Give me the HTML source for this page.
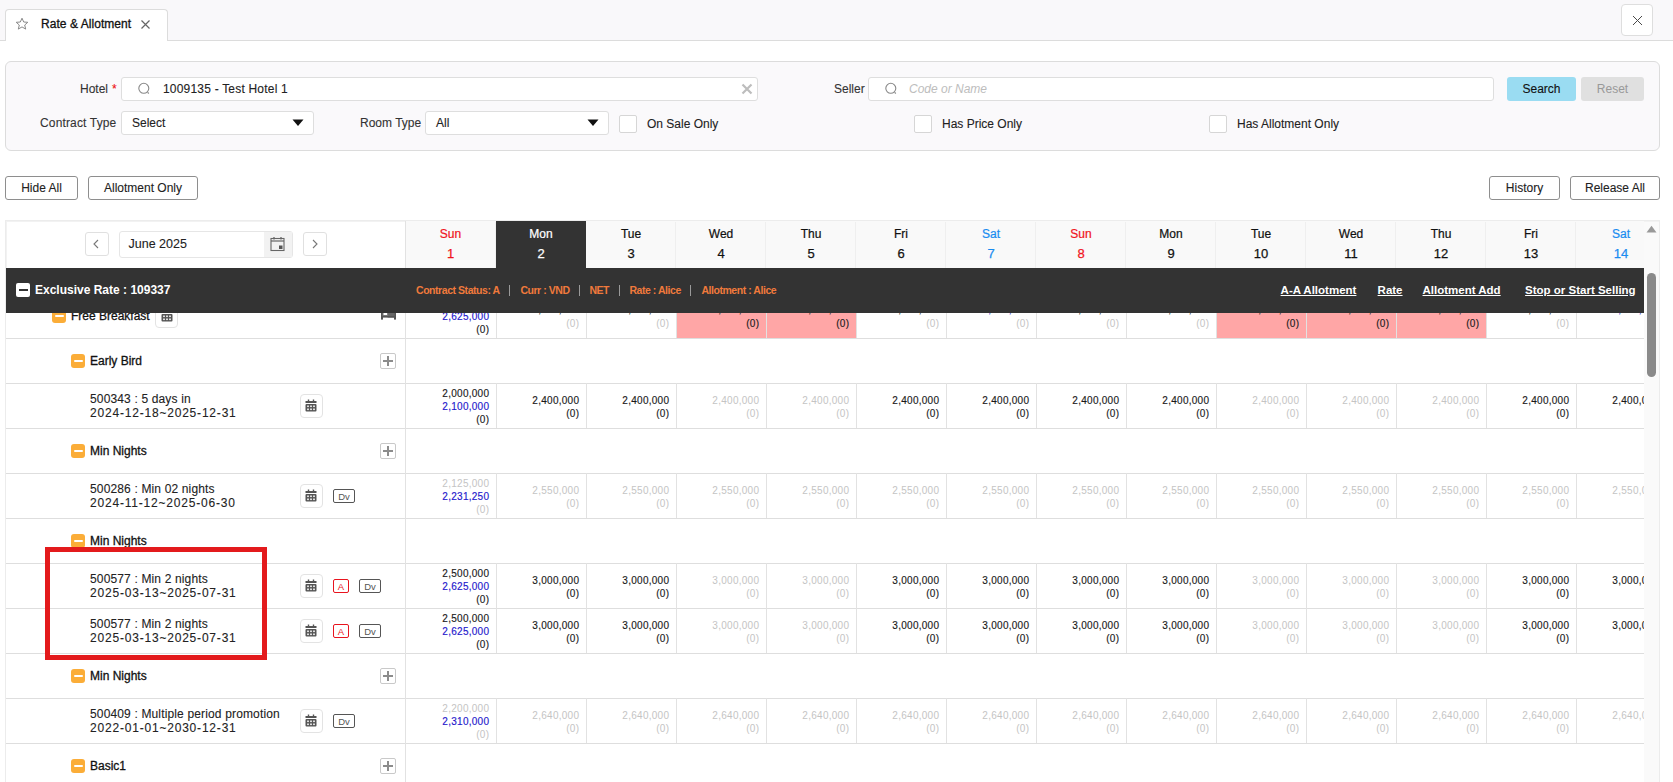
<!DOCTYPE html>
<html><head><meta charset="utf-8"><title>Rate &amp; Allotment</title>
<style>
html,body{margin:0;padding:0;background:#fff;width:1673px;height:782px;overflow:hidden;font-family:"Liberation Sans", sans-serif;}
.t{position:absolute;white-space:nowrap;}

.b{position:absolute;box-sizing:border-box;}
.clip{position:absolute;overflow:hidden;}
</style></head><body>

<div class="b" style="left:0px;top:0px;width:1673px;height:41px;background:#f9f8fa;border-bottom:1px solid #dcdcdc;"></div>
<div class="b" style="left:5px;top:9px;width:163px;height:32px;background:#fff;border:1px solid #dcdcdc;border-bottom:none;border-radius:4px 4px 0 0;"></div>
<svg style="position:absolute;left:15px;top:17px" width="14" height="14" viewBox="0 0 14 14"><path d="M7 1.2 L8.7 5 L12.8 5.3 L9.7 8 L10.7 12.1 L7 9.9 L3.3 12.1 L4.3 8 L1.2 5.3 L5.3 5 Z" fill="none" stroke="#8a8a8a" stroke-width="1" stroke-linejoin="round"/></svg>
<div class="t" style="left:41px;top:16.04px;font-size:12px;line-height:16px;color:#111;font-weight:400;-webkit-text-stroke:0.3px #111;letter-spacing:0.05px;">Rate &amp; Allotment</div>
<svg style="position:absolute;left:140px;top:19px" width="11" height="11" viewBox="0 0 11 11"><path d="M1.5 1.5 L9.5 9.5 M9.5 1.5 L1.5 9.5" stroke="#666" stroke-width="1.2"/></svg>
<div class="b" style="left:1621px;top:4px;width:32px;height:32px;background:#fff;border:1px solid #dedede;border-radius:4px;"></div>
<svg style="position:absolute;left:1632px;top:15px" width="11" height="11" viewBox="0 0 11 11"><path d="M1 1 L10 10 M10 1 L1 10" stroke="#4a4a4a" stroke-width="1"/></svg>
<div class="b" style="left:5px;top:61px;width:1655px;height:90px;background:#faf9fb;border:1px solid #dcdcdc;border-radius:6px;"></div>
<div class="t" style="left:80px;top:81.04px;font-size:12px;line-height:16px;color:#333;font-weight:400;-webkit-text-stroke:0.1px #333;">Hotel</div>
<div class="t" style="left:112px;top:81.04px;font-size:12px;line-height:16px;color:#e11;font-weight:400;-webkit-text-stroke:0.1px #e11;font-size:12px;">*</div>
<div class="b" style="left:121px;top:77px;width:637px;height:24px;background:#fff;border:1px solid #dedede;border-radius:3px;"></div>
<svg style="position:absolute;left:137px;top:82px" width="14" height="14" viewBox="0 0 14 14"><circle cx="6.8" cy="6.3" r="5" fill="none" stroke="#888" stroke-width="1.1"/><path d="M10.6 10.3 L11.8 11.5" stroke="#888" stroke-width="1.2"/></svg>
<div class="t" style="left:163px;top:81.04px;font-size:12px;line-height:16px;color:#222;font-weight:400;-webkit-text-stroke:0.1px #222;letter-spacing:0.2px;">1009135 - Test Hotel 1</div>
<svg style="position:absolute;left:741px;top:83px" width="12" height="12" viewBox="0 0 12 12"><path d="M1.5 1.5 L10.5 10.5 M10.5 1.5 L1.5 10.5" stroke="#bdbdbd" stroke-width="2.2"/></svg>
<div class="t" style="left:834px;top:81.04px;font-size:12px;line-height:16px;color:#333;font-weight:400;-webkit-text-stroke:0.1px #333;">Seller</div>
<div class="b" style="left:868px;top:77px;width:626px;height:24px;background:#fff;border:1px solid #dedede;border-radius:3px;"></div>
<svg style="position:absolute;left:884px;top:82px" width="14" height="14" viewBox="0 0 14 14"><circle cx="6.8" cy="6.3" r="5" fill="none" stroke="#888" stroke-width="1.1"/><path d="M10.6 10.3 L11.8 11.5" stroke="#888" stroke-width="1.2"/></svg>
<div class="t" style="left:909px;top:81.04px;font-size:12px;line-height:16px;color:#bdbdbd;font-weight:400;font-style:italic;">Code or Name</div>
<div class="b" style="left:1507px;top:77px;width:69px;height:24px;background:#9adcf2;border-radius:3px;"></div>
<div class="t" style="left:1507.0px;width:69px;top:80.84px;font-size:12px;line-height:16px;color:#111;font-weight:400;text-align:center;-webkit-text-stroke:0.1px #111;">Search</div>
<div class="b" style="left:1581px;top:77px;width:63px;height:24px;background:#e0e0e0;border-radius:3px;"></div>
<div class="t" style="left:1581.0px;width:63px;top:80.84px;font-size:12px;line-height:16px;color:#999;font-weight:400;text-align:center;">Reset</div>
<div class="t" style="left:40px;top:114.54px;font-size:12px;line-height:16px;color:#333;font-weight:400;-webkit-text-stroke:0.1px #333;letter-spacing:0.15px;">Contract Type</div>
<div class="b" style="left:121px;top:111px;width:193px;height:24px;background:#fff;border:1px solid #dedede;border-radius:3px;"></div>
<div class="t" style="left:132px;top:114.54px;font-size:12px;line-height:16px;color:#222;font-weight:400;-webkit-text-stroke:0.1px #222;">Select</div>
<svg style="position:absolute;left:292px;top:119px" width="12" height="8" viewBox="0 0 12 8"><path d="M0.5 0.5 L11.5 0.5 L6 7 Z" fill="#111"/></svg>
<div class="t" style="left:360px;top:114.54px;font-size:12px;line-height:16px;color:#333;font-weight:400;-webkit-text-stroke:0.1px #333;">Room Type</div>
<div class="b" style="left:425px;top:111px;width:184px;height:24px;background:#fff;border:1px solid #dedede;border-radius:3px;"></div>
<div class="t" style="left:436px;top:114.54px;font-size:12px;line-height:16px;color:#222;font-weight:400;-webkit-text-stroke:0.1px #222;">All</div>
<svg style="position:absolute;left:587px;top:119px" width="12" height="8" viewBox="0 0 12 8"><path d="M0.5 0.5 L11.5 0.5 L6 7 Z" fill="#111"/></svg>
<div class="b" style="left:619px;top:115px;width:18px;height:18px;background:#fff;border:1px solid #d6d6d6;border-radius:2px;"></div>
<div class="t" style="left:647px;top:116.34px;font-size:12px;line-height:16px;color:#222;font-weight:400;-webkit-text-stroke:0.1px #222;">On Sale Only</div>
<div class="b" style="left:914px;top:115px;width:18px;height:18px;background:#fff;border:1px solid #d6d6d6;border-radius:2px;"></div>
<div class="t" style="left:942px;top:116.34px;font-size:12px;line-height:16px;color:#222;font-weight:400;-webkit-text-stroke:0.1px #222;">Has Price Only</div>
<div class="b" style="left:1209px;top:115px;width:18px;height:18px;background:#fff;border:1px solid #d6d6d6;border-radius:2px;"></div>
<div class="t" style="left:1237px;top:116.34px;font-size:12px;line-height:16px;color:#222;font-weight:400;-webkit-text-stroke:0.1px #222;">Has Allotment Only</div>
<div class="b" style="left:5px;top:176px;width:73px;height:24px;background:#fff;border:1px solid #8e8e8e;border-radius:3px;"></div>
<div class="t" style="left:5.0px;width:73px;top:180.24px;font-size:12px;line-height:16px;color:#222;font-weight:400;text-align:center;-webkit-text-stroke:0.1px #222;">Hide All</div>
<div class="b" style="left:88px;top:176px;width:110px;height:24px;background:#fff;border:1px solid #8e8e8e;border-radius:3px;"></div>
<div class="t" style="left:88.0px;width:110px;top:180.24px;font-size:12px;line-height:16px;color:#222;font-weight:400;text-align:center;-webkit-text-stroke:0.1px #222;">Allotment Only</div>
<div class="b" style="left:1489px;top:176px;width:71px;height:24px;background:#fff;border:1px solid #8e8e8e;border-radius:3px;"></div>
<div class="t" style="left:1489.0px;width:71px;top:180.24px;font-size:12px;line-height:16px;color:#222;font-weight:400;text-align:center;-webkit-text-stroke:0.1px #222;">History</div>
<div class="b" style="left:1570px;top:176px;width:90px;height:24px;background:#fff;border:1px solid #8e8e8e;border-radius:3px;"></div>
<div class="t" style="left:1570.0px;width:90px;top:180.24px;font-size:12px;line-height:16px;color:#222;font-weight:400;text-align:center;-webkit-text-stroke:0.1px #222;">Release All</div>
<!--TABLE-->
<div class="b" style="left:5px;top:220px;width:1655px;height:600px;border:1px solid #ececec;"></div>
<div class="b" style="left:6px;top:221px;width:1653px;height:1px;background:#f2f2f2;"></div>
<div class="b" style="left:6px;top:221px;width:1px;height:47px;background:#f2f2f2;"></div>
<div class="b" style="left:1644px;top:222px;width:15px;height:600px;background:#fafafa;"></div>
<svg style="position:absolute;left:1646px;top:225px" width="11" height="8" viewBox="0 0 11 8"><path d="M0.5 7.5 L10.5 7.5 L5.5 0.8 Z" fill="#999"/></svg>
<div class="b" style="left:1647px;top:273px;width:9px;height:104px;background:#8a8a8a;border-radius:5px;"></div>
<div class="clip" style="left:6px;top:221px;width:1638px;height:561px;">
<div style="position:absolute;left:-6px;top:-221px;width:1673px;height:782px;">
<div class="b" style="left:6px;top:338px;width:1660px;height:1px;background:#dedede;"></div>
<div class="b" style="left:6px;top:383px;width:1660px;height:1px;background:#dedede;"></div>
<div class="b" style="left:6px;top:428px;width:1660px;height:1px;background:#dedede;"></div>
<div class="b" style="left:6px;top:473px;width:1660px;height:1px;background:#dedede;"></div>
<div class="b" style="left:6px;top:518px;width:1660px;height:1px;background:#dedede;"></div>
<div class="b" style="left:6px;top:563px;width:1660px;height:1px;background:#dedede;"></div>
<div class="b" style="left:6px;top:608px;width:1660px;height:1px;background:#dedede;"></div>
<div class="b" style="left:6px;top:653px;width:1660px;height:1px;background:#dedede;"></div>
<div class="b" style="left:6px;top:698px;width:1660px;height:1px;background:#dedede;"></div>
<div class="b" style="left:6px;top:743px;width:1660px;height:1px;background:#dedede;"></div>
<div class="b" style="left:6px;top:788px;width:1660px;height:1px;background:#dedede;"></div>
<div class="b" style="left:405px;top:221px;width:1px;height:600px;background:#e2e2e2;"></div>
<div class="b" style="left:406px;top:221px;width:1260px;height:47px;background:#f9f9f9;"></div>
<div class="t" style="left:410.5px;width:80px;top:225.84px;font-size:12px;line-height:16px;color:#f0141e;font-weight:400;text-align:center;-webkit-text-stroke:0.22px #f0141e;">Sun</div>
<div class="t" style="left:410.5px;width:80px;top:245.00px;font-size:13px;line-height:17px;color:#f0141e;font-weight:400;text-align:center;-webkit-text-stroke:0.25px #f0141e;">1</div>
<div class="b" style="left:495px;top:222px;width:1px;height:46px;background:#efefef;"></div>
<div class="b" style="left:496px;top:221px;width:90px;height:47px;background:#333;"></div>
<div class="t" style="left:501.0px;width:80px;top:225.84px;font-size:12px;line-height:16px;color:#fff;font-weight:400;text-align:center;-webkit-text-stroke:0.22px #fff;">Mon</div>
<div class="t" style="left:501.0px;width:80px;top:245.00px;font-size:13px;line-height:17px;color:#fff;font-weight:400;text-align:center;-webkit-text-stroke:0.25px #fff;">2</div>
<div class="t" style="left:591.0px;width:80px;top:225.84px;font-size:12px;line-height:16px;color:#111;font-weight:400;text-align:center;-webkit-text-stroke:0.22px #111;">Tue</div>
<div class="t" style="left:591.0px;width:80px;top:245.00px;font-size:13px;line-height:17px;color:#111;font-weight:400;text-align:center;-webkit-text-stroke:0.25px #111;">3</div>
<div class="b" style="left:675px;top:222px;width:1px;height:46px;background:#efefef;"></div>
<div class="t" style="left:681.0px;width:80px;top:225.84px;font-size:12px;line-height:16px;color:#111;font-weight:400;text-align:center;-webkit-text-stroke:0.22px #111;">Wed</div>
<div class="t" style="left:681.0px;width:80px;top:245.00px;font-size:13px;line-height:17px;color:#111;font-weight:400;text-align:center;-webkit-text-stroke:0.25px #111;">4</div>
<div class="b" style="left:765px;top:222px;width:1px;height:46px;background:#efefef;"></div>
<div class="t" style="left:771.0px;width:80px;top:225.84px;font-size:12px;line-height:16px;color:#111;font-weight:400;text-align:center;-webkit-text-stroke:0.22px #111;">Thu</div>
<div class="t" style="left:771.0px;width:80px;top:245.00px;font-size:13px;line-height:17px;color:#111;font-weight:400;text-align:center;-webkit-text-stroke:0.25px #111;">5</div>
<div class="b" style="left:855px;top:222px;width:1px;height:46px;background:#efefef;"></div>
<div class="t" style="left:861.0px;width:80px;top:225.84px;font-size:12px;line-height:16px;color:#111;font-weight:400;text-align:center;-webkit-text-stroke:0.22px #111;">Fri</div>
<div class="t" style="left:861.0px;width:80px;top:245.00px;font-size:13px;line-height:17px;color:#111;font-weight:400;text-align:center;-webkit-text-stroke:0.25px #111;">6</div>
<div class="b" style="left:945px;top:222px;width:1px;height:46px;background:#efefef;"></div>
<div class="t" style="left:951.0px;width:80px;top:225.84px;font-size:12px;line-height:16px;color:#1a8cf0;font-weight:400;text-align:center;-webkit-text-stroke:0.22px #1a8cf0;">Sat</div>
<div class="t" style="left:951.0px;width:80px;top:245.00px;font-size:13px;line-height:17px;color:#1a8cf0;font-weight:400;text-align:center;-webkit-text-stroke:0.25px #1a8cf0;">7</div>
<div class="b" style="left:1035px;top:222px;width:1px;height:46px;background:#efefef;"></div>
<div class="t" style="left:1041.0px;width:80px;top:225.84px;font-size:12px;line-height:16px;color:#f0141e;font-weight:400;text-align:center;-webkit-text-stroke:0.22px #f0141e;">Sun</div>
<div class="t" style="left:1041.0px;width:80px;top:245.00px;font-size:13px;line-height:17px;color:#f0141e;font-weight:400;text-align:center;-webkit-text-stroke:0.25px #f0141e;">8</div>
<div class="b" style="left:1125px;top:222px;width:1px;height:46px;background:#efefef;"></div>
<div class="t" style="left:1131.0px;width:80px;top:225.84px;font-size:12px;line-height:16px;color:#111;font-weight:400;text-align:center;-webkit-text-stroke:0.22px #111;">Mon</div>
<div class="t" style="left:1131.0px;width:80px;top:245.00px;font-size:13px;line-height:17px;color:#111;font-weight:400;text-align:center;-webkit-text-stroke:0.25px #111;">9</div>
<div class="b" style="left:1215px;top:222px;width:1px;height:46px;background:#efefef;"></div>
<div class="t" style="left:1221.0px;width:80px;top:225.84px;font-size:12px;line-height:16px;color:#111;font-weight:400;text-align:center;-webkit-text-stroke:0.22px #111;">Tue</div>
<div class="t" style="left:1221.0px;width:80px;top:245.00px;font-size:13px;line-height:17px;color:#111;font-weight:400;text-align:center;-webkit-text-stroke:0.25px #111;">10</div>
<div class="b" style="left:1305px;top:222px;width:1px;height:46px;background:#efefef;"></div>
<div class="t" style="left:1311.0px;width:80px;top:225.84px;font-size:12px;line-height:16px;color:#111;font-weight:400;text-align:center;-webkit-text-stroke:0.22px #111;">Wed</div>
<div class="t" style="left:1311.0px;width:80px;top:245.00px;font-size:13px;line-height:17px;color:#111;font-weight:400;text-align:center;-webkit-text-stroke:0.25px #111;">11</div>
<div class="b" style="left:1395px;top:222px;width:1px;height:46px;background:#efefef;"></div>
<div class="t" style="left:1401.0px;width:80px;top:225.84px;font-size:12px;line-height:16px;color:#111;font-weight:400;text-align:center;-webkit-text-stroke:0.22px #111;">Thu</div>
<div class="t" style="left:1401.0px;width:80px;top:245.00px;font-size:13px;line-height:17px;color:#111;font-weight:400;text-align:center;-webkit-text-stroke:0.25px #111;">12</div>
<div class="b" style="left:1485px;top:222px;width:1px;height:46px;background:#efefef;"></div>
<div class="t" style="left:1491.0px;width:80px;top:225.84px;font-size:12px;line-height:16px;color:#111;font-weight:400;text-align:center;-webkit-text-stroke:0.22px #111;">Fri</div>
<div class="t" style="left:1491.0px;width:80px;top:245.00px;font-size:13px;line-height:17px;color:#111;font-weight:400;text-align:center;-webkit-text-stroke:0.25px #111;">13</div>
<div class="b" style="left:1575px;top:222px;width:1px;height:46px;background:#efefef;"></div>
<div class="t" style="left:1581.0px;width:80px;top:225.84px;font-size:12px;line-height:16px;color:#1a8cf0;font-weight:400;text-align:center;-webkit-text-stroke:0.22px #1a8cf0;">Sat</div>
<div class="t" style="left:1581.0px;width:80px;top:245.00px;font-size:13px;line-height:17px;color:#1a8cf0;font-weight:400;text-align:center;-webkit-text-stroke:0.25px #1a8cf0;">14</div>
<div class="b" style="left:85px;top:232px;width:24px;height:24px;background:#fff;border:1px solid #e0e0e0;border-radius:3px;"></div>
<svg style="position:absolute;left:92px;top:239px" width="9" height="10" viewBox="0 0 9 10"><path d="M6 1 L2 5 L6 9" fill="none" stroke="#777" stroke-width="1.1"/></svg>
<div class="b" style="left:119px;top:231px;width:174px;height:27px;background:#fff;border:1px solid #e6e6e6;border-radius:3px;"></div>
<div class="b" style="left:264px;top:232px;width:28px;height:25px;background:#f2f2f2;"></div>
<svg style="position:absolute;left:270px;top:236px" width="16" height="16" viewBox="0 0 16 16"><rect x="1" y="2.5" width="13" height="12" fill="none" stroke="#666" stroke-width="1.1"/><path d="M1 5 L14 5" stroke="#666" stroke-width="1.2"/><path d="M4 1 L4 3.5 M11 1 L11 3.5" stroke="#666" stroke-width="1.3"/><rect x="9" y="9.5" width="3.5" height="3.5" fill="#555"/></svg>
<div class="t" style="left:128.5px;top:236.42px;font-size:12.5px;line-height:16.5px;color:#222;font-weight:400;-webkit-text-stroke:0.1px #222;">June 2025</div>
<div class="b" style="left:303px;top:232px;width:24px;height:24px;background:#fff;border:1px solid #e0e0e0;border-radius:3px;"></div>
<svg style="position:absolute;left:310px;top:239px" width="9" height="10" viewBox="0 0 9 10"><path d="M3 1 L7 5 L3 9" fill="none" stroke="#777" stroke-width="1.1"/></svg>
<div class="b" style="left:52px;top:309px;width:14px;height:14px;background:#fbad38;border-radius:3px;"></div>
<div class="b" style="left:55px;top:315px;width:8.5px;height:2px;background:#fff;border-radius:1px;"></div>
<div class="t" style="left:71px;top:307.84px;font-size:12px;line-height:16px;color:#111;font-weight:400;-webkit-text-stroke:0.3px #111;">Free Breakfast</div>
<div class="b" style="left:155px;top:304px;width:23px;height:24px;background:#fff;border:1px solid #e3e3e3;border-radius:4px;"></div>
<svg style="position:absolute;left:161px;top:309px" width="12" height="13" viewBox="0 0 12 13"><rect x="0.5" y="2" width="11" height="2" fill="#555"/><rect x="0.5" y="5" width="11" height="7.5" rx="1" fill="#555"/><g fill="#fff"><rect x="2.2" y="6.5" width="1.6" height="1.6"/><rect x="5.2" y="6.5" width="1.6" height="1.6"/><rect x="8.2" y="6.5" width="1.6" height="1.6"/><rect x="2.2" y="9.5" width="1.6" height="1.6"/><rect x="5.2" y="9.5" width="1.6" height="1.6"/><rect x="8.2" y="9.5" width="1.6" height="1.6"/></g></svg>
<svg style="position:absolute;left:380px;top:305px" width="17" height="16" viewBox="0 0 17 16"><rect x="1" y="0" width="2" height="14.6" fill="#555"/><rect x="14" y="0" width="2" height="14.6" fill="#555"/><rect x="7.6" y="0" width="7" height="12.5" fill="#666"/><rect x="1" y="11" width="15" height="1.6" fill="#555"/><rect x="3" y="-2" width="4.6" height="12.5" fill="#fff" stroke="#777" stroke-width="1"/></svg>
<div class="t" style="right:1183.7px;top:297.04px;font-size:10px;line-height:13px;color:#1a1a1a;font-weight:400;text-align:right;-webkit-text-stroke:0.15px #1a1a1a;letter-spacing:0.28px;">2,500,000</div>
<div class="t" style="right:1183.7px;top:310.04px;font-size:10px;line-height:13px;color:#2418cc;font-weight:400;text-align:right;-webkit-text-stroke:0.15px #2418cc;letter-spacing:0.28px;">2,625,000</div>
<div class="t" style="right:1183.7px;top:323.04px;font-size:10px;line-height:13px;color:#1a1a1a;font-weight:400;text-align:right;-webkit-text-stroke:0.15px #1a1a1a;letter-spacing:0.28px;">(0)</div>
<div class="b" style="left:496px;top:293px;width:1px;height:45px;background:#e2e2e2;"></div>
<div class="t" style="right:1093.7px;top:302.54px;font-size:10px;line-height:13px;color:#1a1a1a;font-weight:400;text-align:right;-webkit-text-stroke:0.15px #1a1a1a;letter-spacing:0.28px;">3,000,000</div>
<div class="t" style="right:1093.7px;top:316.54px;font-size:10px;line-height:13px;color:#c4c4c4;font-weight:400;text-align:right;letter-spacing:0.28px;">(0)</div>
<div class="b" style="left:586px;top:293px;width:1px;height:45px;background:#e2e2e2;"></div>
<div class="t" style="right:1003.7px;top:302.54px;font-size:10px;line-height:13px;color:#1a1a1a;font-weight:400;text-align:right;-webkit-text-stroke:0.15px #1a1a1a;letter-spacing:0.28px;">3,000,000</div>
<div class="t" style="right:1003.7px;top:316.54px;font-size:10px;line-height:13px;color:#c4c4c4;font-weight:400;text-align:right;letter-spacing:0.28px;">(0)</div>
<div class="b" style="left:677px;top:293px;width:89px;height:45px;background:#ffa6a6;"></div>
<div class="b" style="left:676px;top:293px;width:1px;height:45px;background:#e2e2e2;"></div>
<div class="t" style="right:913.7px;top:302.54px;font-size:10px;line-height:13px;color:#1a1a1a;font-weight:400;text-align:right;-webkit-text-stroke:0.15px #1a1a1a;letter-spacing:0.28px;">3,000,000</div>
<div class="t" style="right:913.7px;top:316.54px;font-size:10px;line-height:13px;color:#1a1a1a;font-weight:400;text-align:right;-webkit-text-stroke:0.15px #1a1a1a;letter-spacing:0.28px;">(0)</div>
<div class="b" style="left:767px;top:293px;width:89px;height:45px;background:#ffa6a6;"></div>
<div class="b" style="left:766px;top:293px;width:1px;height:45px;background:#e2e2e2;"></div>
<div class="t" style="right:823.7px;top:302.54px;font-size:10px;line-height:13px;color:#1a1a1a;font-weight:400;text-align:right;-webkit-text-stroke:0.15px #1a1a1a;letter-spacing:0.28px;">3,000,000</div>
<div class="t" style="right:823.7px;top:316.54px;font-size:10px;line-height:13px;color:#1a1a1a;font-weight:400;text-align:right;-webkit-text-stroke:0.15px #1a1a1a;letter-spacing:0.28px;">(0)</div>
<div class="b" style="left:856px;top:293px;width:1px;height:45px;background:#e2e2e2;"></div>
<div class="t" style="right:733.7px;top:302.54px;font-size:10px;line-height:13px;color:#1a1a1a;font-weight:400;text-align:right;-webkit-text-stroke:0.15px #1a1a1a;letter-spacing:0.28px;">3,000,000</div>
<div class="t" style="right:733.7px;top:316.54px;font-size:10px;line-height:13px;color:#c4c4c4;font-weight:400;text-align:right;letter-spacing:0.28px;">(0)</div>
<div class="b" style="left:946px;top:293px;width:1px;height:45px;background:#e2e2e2;"></div>
<div class="t" style="right:643.7px;top:302.54px;font-size:10px;line-height:13px;color:#2418cc;font-weight:400;text-align:right;-webkit-text-stroke:0.15px #2418cc;letter-spacing:0.28px;">3,000,000</div>
<div class="t" style="right:643.7px;top:316.54px;font-size:10px;line-height:13px;color:#c4c4c4;font-weight:400;text-align:right;letter-spacing:0.28px;">(0)</div>
<div class="b" style="left:1036px;top:293px;width:1px;height:45px;background:#e2e2e2;"></div>
<div class="t" style="right:553.7px;top:302.54px;font-size:10px;line-height:13px;color:#1a1a1a;font-weight:400;text-align:right;-webkit-text-stroke:0.15px #1a1a1a;letter-spacing:0.28px;">3,000,000</div>
<div class="t" style="right:553.7px;top:316.54px;font-size:10px;line-height:13px;color:#c4c4c4;font-weight:400;text-align:right;letter-spacing:0.28px;">(0)</div>
<div class="b" style="left:1126px;top:293px;width:1px;height:45px;background:#e2e2e2;"></div>
<div class="t" style="right:463.70000000000005px;top:302.54px;font-size:10px;line-height:13px;color:#1a1a1a;font-weight:400;text-align:right;-webkit-text-stroke:0.15px #1a1a1a;letter-spacing:0.28px;">3,000,000</div>
<div class="t" style="right:463.70000000000005px;top:316.54px;font-size:10px;line-height:13px;color:#c4c4c4;font-weight:400;text-align:right;letter-spacing:0.28px;">(0)</div>
<div class="b" style="left:1217px;top:293px;width:89px;height:45px;background:#ffa6a6;"></div>
<div class="b" style="left:1216px;top:293px;width:1px;height:45px;background:#e2e2e2;"></div>
<div class="t" style="right:373.70000000000005px;top:302.54px;font-size:10px;line-height:13px;color:#1a1a1a;font-weight:400;text-align:right;-webkit-text-stroke:0.15px #1a1a1a;letter-spacing:0.28px;">3,000,000</div>
<div class="t" style="right:373.70000000000005px;top:316.54px;font-size:10px;line-height:13px;color:#1a1a1a;font-weight:400;text-align:right;-webkit-text-stroke:0.15px #1a1a1a;letter-spacing:0.28px;">(0)</div>
<div class="b" style="left:1307px;top:293px;width:89px;height:45px;background:#ffa6a6;"></div>
<div class="b" style="left:1306px;top:293px;width:1px;height:45px;background:#e2e2e2;"></div>
<div class="t" style="right:283.70000000000005px;top:302.54px;font-size:10px;line-height:13px;color:#1a1a1a;font-weight:400;text-align:right;-webkit-text-stroke:0.15px #1a1a1a;letter-spacing:0.28px;">3,000,000</div>
<div class="t" style="right:283.70000000000005px;top:316.54px;font-size:10px;line-height:13px;color:#1a1a1a;font-weight:400;text-align:right;-webkit-text-stroke:0.15px #1a1a1a;letter-spacing:0.28px;">(0)</div>
<div class="b" style="left:1397px;top:293px;width:89px;height:45px;background:#ffa6a6;"></div>
<div class="b" style="left:1396px;top:293px;width:1px;height:45px;background:#e2e2e2;"></div>
<div class="t" style="right:193.70000000000005px;top:302.54px;font-size:10px;line-height:13px;color:#1a1a1a;font-weight:400;text-align:right;-webkit-text-stroke:0.15px #1a1a1a;letter-spacing:0.28px;">3,000,000</div>
<div class="t" style="right:193.70000000000005px;top:316.54px;font-size:10px;line-height:13px;color:#1a1a1a;font-weight:400;text-align:right;-webkit-text-stroke:0.15px #1a1a1a;letter-spacing:0.28px;">(0)</div>
<div class="b" style="left:1486px;top:293px;width:1px;height:45px;background:#e2e2e2;"></div>
<div class="t" style="right:103.70000000000005px;top:302.54px;font-size:10px;line-height:13px;color:#1a1a1a;font-weight:400;text-align:right;-webkit-text-stroke:0.15px #1a1a1a;letter-spacing:0.28px;">3,000,000</div>
<div class="t" style="right:103.70000000000005px;top:316.54px;font-size:10px;line-height:13px;color:#c4c4c4;font-weight:400;text-align:right;letter-spacing:0.28px;">(0)</div>
<div class="b" style="left:1576px;top:293px;width:1px;height:45px;background:#e2e2e2;"></div>
<div class="t" style="right:13.700000000000045px;top:302.54px;font-size:10px;line-height:13px;color:#2418cc;font-weight:400;text-align:right;-webkit-text-stroke:0.15px #2418cc;letter-spacing:0.28px;">3,000,000</div>
<div class="t" style="right:13.700000000000045px;top:316.54px;font-size:10px;line-height:13px;color:#c4c4c4;font-weight:400;text-align:right;letter-spacing:0.28px;">(0)</div>
<div class="b" style="left:71px;top:354px;width:14px;height:14px;background:#fbad38;border-radius:3px;"></div>
<div class="b" style="left:74px;top:360px;width:8.5px;height:2px;background:#fff;border-radius:1px;"></div>
<div class="t" style="left:90px;top:353.24px;font-size:12px;line-height:16px;color:#111;font-weight:400;-webkit-text-stroke:0.3px #111;">Early Bird</div>
<div class="b" style="left:380px;top:353px;width:16px;height:16px;background:#fff;border:1px solid #c9c9c9;border-radius:2px;"></div>
<div class="b" style="left:383px;top:360px;width:10px;height:1.6px;background:#8c8c8c;"></div>
<div class="b" style="left:387.2px;top:356px;width:1.6px;height:10px;background:#8c8c8c;"></div>
<div class="t" style="left:90px;top:391.84px;font-size:12px;line-height:14px;color:#222;font-weight:400;-webkit-text-stroke:0.1px #222;letter-spacing:0.15px;">500343 : 5 days in</div>
<div class="t" style="left:90px;top:406.04px;font-size:12px;line-height:14px;color:#222;font-weight:400;-webkit-text-stroke:0.1px #222;letter-spacing:0.8px;">2024-12-18~2025-12-31</div>
<div class="b" style="left:300px;top:394px;width:23px;height:24px;background:#fff;border:1px solid #e3e3e3;border-radius:4px;"></div>
<svg style="position:absolute;left:305px;top:399px" width="12" height="13" viewBox="0 0 12 13"><path d="M3.5 0.5 L3.5 3 M8.5 0.5 L8.5 3" stroke="#555" stroke-width="1.4"/><rect x="0.5" y="2" width="11" height="2" fill="#555"/><rect x="0.5" y="5" width="11" height="7.5" rx="1" fill="#555"/><g fill="#fff"><rect x="2.2" y="6.5" width="1.6" height="1.6"/><rect x="5.2" y="6.5" width="1.6" height="1.6"/><rect x="8.2" y="6.5" width="1.6" height="1.6"/><rect x="2.2" y="9.5" width="1.6" height="1.6"/><rect x="5.2" y="9.5" width="1.6" height="1.6"/><rect x="8.2" y="9.5" width="1.6" height="1.6"/></g></svg>
<div class="t" style="right:1183.7px;top:387.04px;font-size:10px;line-height:13px;color:#1a1a1a;font-weight:400;text-align:right;-webkit-text-stroke:0.15px #1a1a1a;letter-spacing:0.28px;">2,000,000</div>
<div class="t" style="right:1183.7px;top:400.04px;font-size:10px;line-height:13px;color:#2418cc;font-weight:400;text-align:right;-webkit-text-stroke:0.15px #2418cc;letter-spacing:0.28px;">2,100,000</div>
<div class="t" style="right:1183.7px;top:413.04px;font-size:10px;line-height:13px;color:#1a1a1a;font-weight:400;text-align:right;-webkit-text-stroke:0.15px #1a1a1a;letter-spacing:0.28px;">(0)</div>
<div class="b" style="left:496px;top:383px;width:1px;height:45px;background:#e2e2e2;"></div>
<div class="t" style="right:1093.7px;top:393.54px;font-size:10px;line-height:13px;color:#1a1a1a;font-weight:400;text-align:right;-webkit-text-stroke:0.15px #1a1a1a;letter-spacing:0.28px;">2,400,000</div>
<div class="t" style="right:1093.7px;top:406.54px;font-size:10px;line-height:13px;color:#1a1a1a;font-weight:400;text-align:right;-webkit-text-stroke:0.15px #1a1a1a;letter-spacing:0.28px;">(0)</div>
<div class="b" style="left:586px;top:383px;width:1px;height:45px;background:#e2e2e2;"></div>
<div class="t" style="right:1003.7px;top:393.54px;font-size:10px;line-height:13px;color:#1a1a1a;font-weight:400;text-align:right;-webkit-text-stroke:0.15px #1a1a1a;letter-spacing:0.28px;">2,400,000</div>
<div class="t" style="right:1003.7px;top:406.54px;font-size:10px;line-height:13px;color:#1a1a1a;font-weight:400;text-align:right;-webkit-text-stroke:0.15px #1a1a1a;letter-spacing:0.28px;">(0)</div>
<div class="b" style="left:676px;top:383px;width:1px;height:45px;background:#e2e2e2;"></div>
<div class="t" style="right:913.7px;top:393.54px;font-size:10px;line-height:13px;color:#c4c4c4;font-weight:400;text-align:right;letter-spacing:0.28px;">2,400,000</div>
<div class="t" style="right:913.7px;top:406.54px;font-size:10px;line-height:13px;color:#c4c4c4;font-weight:400;text-align:right;letter-spacing:0.28px;">(0)</div>
<div class="b" style="left:766px;top:383px;width:1px;height:45px;background:#e2e2e2;"></div>
<div class="t" style="right:823.7px;top:393.54px;font-size:10px;line-height:13px;color:#c4c4c4;font-weight:400;text-align:right;letter-spacing:0.28px;">2,400,000</div>
<div class="t" style="right:823.7px;top:406.54px;font-size:10px;line-height:13px;color:#c4c4c4;font-weight:400;text-align:right;letter-spacing:0.28px;">(0)</div>
<div class="b" style="left:856px;top:383px;width:1px;height:45px;background:#e2e2e2;"></div>
<div class="t" style="right:733.7px;top:393.54px;font-size:10px;line-height:13px;color:#1a1a1a;font-weight:400;text-align:right;-webkit-text-stroke:0.15px #1a1a1a;letter-spacing:0.28px;">2,400,000</div>
<div class="t" style="right:733.7px;top:406.54px;font-size:10px;line-height:13px;color:#1a1a1a;font-weight:400;text-align:right;-webkit-text-stroke:0.15px #1a1a1a;letter-spacing:0.28px;">(0)</div>
<div class="b" style="left:946px;top:383px;width:1px;height:45px;background:#e2e2e2;"></div>
<div class="t" style="right:643.7px;top:393.54px;font-size:10px;line-height:13px;color:#1a1a1a;font-weight:400;text-align:right;-webkit-text-stroke:0.15px #1a1a1a;letter-spacing:0.28px;">2,400,000</div>
<div class="t" style="right:643.7px;top:406.54px;font-size:10px;line-height:13px;color:#1a1a1a;font-weight:400;text-align:right;-webkit-text-stroke:0.15px #1a1a1a;letter-spacing:0.28px;">(0)</div>
<div class="b" style="left:1036px;top:383px;width:1px;height:45px;background:#e2e2e2;"></div>
<div class="t" style="right:553.7px;top:393.54px;font-size:10px;line-height:13px;color:#1a1a1a;font-weight:400;text-align:right;-webkit-text-stroke:0.15px #1a1a1a;letter-spacing:0.28px;">2,400,000</div>
<div class="t" style="right:553.7px;top:406.54px;font-size:10px;line-height:13px;color:#1a1a1a;font-weight:400;text-align:right;-webkit-text-stroke:0.15px #1a1a1a;letter-spacing:0.28px;">(0)</div>
<div class="b" style="left:1126px;top:383px;width:1px;height:45px;background:#e2e2e2;"></div>
<div class="t" style="right:463.70000000000005px;top:393.54px;font-size:10px;line-height:13px;color:#1a1a1a;font-weight:400;text-align:right;-webkit-text-stroke:0.15px #1a1a1a;letter-spacing:0.28px;">2,400,000</div>
<div class="t" style="right:463.70000000000005px;top:406.54px;font-size:10px;line-height:13px;color:#1a1a1a;font-weight:400;text-align:right;-webkit-text-stroke:0.15px #1a1a1a;letter-spacing:0.28px;">(0)</div>
<div class="b" style="left:1216px;top:383px;width:1px;height:45px;background:#e2e2e2;"></div>
<div class="t" style="right:373.70000000000005px;top:393.54px;font-size:10px;line-height:13px;color:#c4c4c4;font-weight:400;text-align:right;letter-spacing:0.28px;">2,400,000</div>
<div class="t" style="right:373.70000000000005px;top:406.54px;font-size:10px;line-height:13px;color:#c4c4c4;font-weight:400;text-align:right;letter-spacing:0.28px;">(0)</div>
<div class="b" style="left:1306px;top:383px;width:1px;height:45px;background:#e2e2e2;"></div>
<div class="t" style="right:283.70000000000005px;top:393.54px;font-size:10px;line-height:13px;color:#c4c4c4;font-weight:400;text-align:right;letter-spacing:0.28px;">2,400,000</div>
<div class="t" style="right:283.70000000000005px;top:406.54px;font-size:10px;line-height:13px;color:#c4c4c4;font-weight:400;text-align:right;letter-spacing:0.28px;">(0)</div>
<div class="b" style="left:1396px;top:383px;width:1px;height:45px;background:#e2e2e2;"></div>
<div class="t" style="right:193.70000000000005px;top:393.54px;font-size:10px;line-height:13px;color:#c4c4c4;font-weight:400;text-align:right;letter-spacing:0.28px;">2,400,000</div>
<div class="t" style="right:193.70000000000005px;top:406.54px;font-size:10px;line-height:13px;color:#c4c4c4;font-weight:400;text-align:right;letter-spacing:0.28px;">(0)</div>
<div class="b" style="left:1486px;top:383px;width:1px;height:45px;background:#e2e2e2;"></div>
<div class="t" style="right:103.70000000000005px;top:393.54px;font-size:10px;line-height:13px;color:#1a1a1a;font-weight:400;text-align:right;-webkit-text-stroke:0.15px #1a1a1a;letter-spacing:0.28px;">2,400,000</div>
<div class="t" style="right:103.70000000000005px;top:406.54px;font-size:10px;line-height:13px;color:#1a1a1a;font-weight:400;text-align:right;-webkit-text-stroke:0.15px #1a1a1a;letter-spacing:0.28px;">(0)</div>
<div class="b" style="left:1576px;top:383px;width:1px;height:45px;background:#e2e2e2;"></div>
<div class="t" style="right:13.700000000000045px;top:393.54px;font-size:10px;line-height:13px;color:#1a1a1a;font-weight:400;text-align:right;-webkit-text-stroke:0.15px #1a1a1a;letter-spacing:0.28px;">2,400,000</div>
<div class="t" style="right:13.700000000000045px;top:406.54px;font-size:10px;line-height:13px;color:#1a1a1a;font-weight:400;text-align:right;-webkit-text-stroke:0.15px #1a1a1a;letter-spacing:0.28px;">(0)</div>
<div class="b" style="left:71px;top:444px;width:14px;height:14px;background:#fbad38;border-radius:3px;"></div>
<div class="b" style="left:74px;top:450px;width:8.5px;height:2px;background:#fff;border-radius:1px;"></div>
<div class="t" style="left:90px;top:443.24px;font-size:12px;line-height:16px;color:#111;font-weight:400;-webkit-text-stroke:0.3px #111;">Min Nights</div>
<div class="b" style="left:380px;top:443px;width:16px;height:16px;background:#fff;border:1px solid #c9c9c9;border-radius:2px;"></div>
<div class="b" style="left:383px;top:450px;width:10px;height:1.6px;background:#8c8c8c;"></div>
<div class="b" style="left:387.2px;top:446px;width:1.6px;height:10px;background:#8c8c8c;"></div>
<div class="t" style="left:90px;top:481.84px;font-size:12px;line-height:14px;color:#222;font-weight:400;-webkit-text-stroke:0.1px #222;letter-spacing:0.15px;">500286 : Min 02 nights</div>
<div class="t" style="left:90px;top:496.04px;font-size:12px;line-height:14px;color:#222;font-weight:400;-webkit-text-stroke:0.1px #222;letter-spacing:0.8px;">2024-11-12~2025-06-30</div>
<div class="b" style="left:300px;top:484px;width:23px;height:24px;background:#fff;border:1px solid #e3e3e3;border-radius:4px;"></div>
<svg style="position:absolute;left:305px;top:489px" width="12" height="13" viewBox="0 0 12 13"><path d="M3.5 0.5 L3.5 3 M8.5 0.5 L8.5 3" stroke="#555" stroke-width="1.4"/><rect x="0.5" y="2" width="11" height="2" fill="#555"/><rect x="0.5" y="5" width="11" height="7.5" rx="1" fill="#555"/><g fill="#fff"><rect x="2.2" y="6.5" width="1.6" height="1.6"/><rect x="5.2" y="6.5" width="1.6" height="1.6"/><rect x="8.2" y="6.5" width="1.6" height="1.6"/><rect x="2.2" y="9.5" width="1.6" height="1.6"/><rect x="5.2" y="9.5" width="1.6" height="1.6"/><rect x="8.2" y="9.5" width="1.6" height="1.6"/></g></svg>
<div class="b" style="left:333px;top:489px;width:22px;height:14px;border:1px solid #555;border-radius:2px;color:#555;font-size:9.5px;line-height:13px;text-align:center;font-family:"Liberation Sans", sans-serif;">Dv</div>
<div class="t" style="right:1183.7px;top:477.04px;font-size:10px;line-height:13px;color:#c4c4c4;font-weight:400;text-align:right;letter-spacing:0.28px;">2,125,000</div>
<div class="t" style="right:1183.7px;top:490.04px;font-size:10px;line-height:13px;color:#2418cc;font-weight:400;text-align:right;-webkit-text-stroke:0.15px #2418cc;letter-spacing:0.28px;">2,231,250</div>
<div class="t" style="right:1183.7px;top:503.04px;font-size:10px;line-height:13px;color:#c4c4c4;font-weight:400;text-align:right;letter-spacing:0.28px;">(0)</div>
<div class="b" style="left:496px;top:473px;width:1px;height:45px;background:#e2e2e2;"></div>
<div class="t" style="right:1093.7px;top:483.54px;font-size:10px;line-height:13px;color:#c4c4c4;font-weight:400;text-align:right;letter-spacing:0.28px;">2,550,000</div>
<div class="t" style="right:1093.7px;top:496.54px;font-size:10px;line-height:13px;color:#c4c4c4;font-weight:400;text-align:right;letter-spacing:0.28px;">(0)</div>
<div class="b" style="left:586px;top:473px;width:1px;height:45px;background:#e2e2e2;"></div>
<div class="t" style="right:1003.7px;top:483.54px;font-size:10px;line-height:13px;color:#c4c4c4;font-weight:400;text-align:right;letter-spacing:0.28px;">2,550,000</div>
<div class="t" style="right:1003.7px;top:496.54px;font-size:10px;line-height:13px;color:#c4c4c4;font-weight:400;text-align:right;letter-spacing:0.28px;">(0)</div>
<div class="b" style="left:676px;top:473px;width:1px;height:45px;background:#e2e2e2;"></div>
<div class="t" style="right:913.7px;top:483.54px;font-size:10px;line-height:13px;color:#c4c4c4;font-weight:400;text-align:right;letter-spacing:0.28px;">2,550,000</div>
<div class="t" style="right:913.7px;top:496.54px;font-size:10px;line-height:13px;color:#c4c4c4;font-weight:400;text-align:right;letter-spacing:0.28px;">(0)</div>
<div class="b" style="left:766px;top:473px;width:1px;height:45px;background:#e2e2e2;"></div>
<div class="t" style="right:823.7px;top:483.54px;font-size:10px;line-height:13px;color:#c4c4c4;font-weight:400;text-align:right;letter-spacing:0.28px;">2,550,000</div>
<div class="t" style="right:823.7px;top:496.54px;font-size:10px;line-height:13px;color:#c4c4c4;font-weight:400;text-align:right;letter-spacing:0.28px;">(0)</div>
<div class="b" style="left:856px;top:473px;width:1px;height:45px;background:#e2e2e2;"></div>
<div class="t" style="right:733.7px;top:483.54px;font-size:10px;line-height:13px;color:#c4c4c4;font-weight:400;text-align:right;letter-spacing:0.28px;">2,550,000</div>
<div class="t" style="right:733.7px;top:496.54px;font-size:10px;line-height:13px;color:#c4c4c4;font-weight:400;text-align:right;letter-spacing:0.28px;">(0)</div>
<div class="b" style="left:946px;top:473px;width:1px;height:45px;background:#e2e2e2;"></div>
<div class="t" style="right:643.7px;top:483.54px;font-size:10px;line-height:13px;color:#c4c4c4;font-weight:400;text-align:right;letter-spacing:0.28px;">2,550,000</div>
<div class="t" style="right:643.7px;top:496.54px;font-size:10px;line-height:13px;color:#c4c4c4;font-weight:400;text-align:right;letter-spacing:0.28px;">(0)</div>
<div class="b" style="left:1036px;top:473px;width:1px;height:45px;background:#e2e2e2;"></div>
<div class="t" style="right:553.7px;top:483.54px;font-size:10px;line-height:13px;color:#c4c4c4;font-weight:400;text-align:right;letter-spacing:0.28px;">2,550,000</div>
<div class="t" style="right:553.7px;top:496.54px;font-size:10px;line-height:13px;color:#c4c4c4;font-weight:400;text-align:right;letter-spacing:0.28px;">(0)</div>
<div class="b" style="left:1126px;top:473px;width:1px;height:45px;background:#e2e2e2;"></div>
<div class="t" style="right:463.70000000000005px;top:483.54px;font-size:10px;line-height:13px;color:#c4c4c4;font-weight:400;text-align:right;letter-spacing:0.28px;">2,550,000</div>
<div class="t" style="right:463.70000000000005px;top:496.54px;font-size:10px;line-height:13px;color:#c4c4c4;font-weight:400;text-align:right;letter-spacing:0.28px;">(0)</div>
<div class="b" style="left:1216px;top:473px;width:1px;height:45px;background:#e2e2e2;"></div>
<div class="t" style="right:373.70000000000005px;top:483.54px;font-size:10px;line-height:13px;color:#c4c4c4;font-weight:400;text-align:right;letter-spacing:0.28px;">2,550,000</div>
<div class="t" style="right:373.70000000000005px;top:496.54px;font-size:10px;line-height:13px;color:#c4c4c4;font-weight:400;text-align:right;letter-spacing:0.28px;">(0)</div>
<div class="b" style="left:1306px;top:473px;width:1px;height:45px;background:#e2e2e2;"></div>
<div class="t" style="right:283.70000000000005px;top:483.54px;font-size:10px;line-height:13px;color:#c4c4c4;font-weight:400;text-align:right;letter-spacing:0.28px;">2,550,000</div>
<div class="t" style="right:283.70000000000005px;top:496.54px;font-size:10px;line-height:13px;color:#c4c4c4;font-weight:400;text-align:right;letter-spacing:0.28px;">(0)</div>
<div class="b" style="left:1396px;top:473px;width:1px;height:45px;background:#e2e2e2;"></div>
<div class="t" style="right:193.70000000000005px;top:483.54px;font-size:10px;line-height:13px;color:#c4c4c4;font-weight:400;text-align:right;letter-spacing:0.28px;">2,550,000</div>
<div class="t" style="right:193.70000000000005px;top:496.54px;font-size:10px;line-height:13px;color:#c4c4c4;font-weight:400;text-align:right;letter-spacing:0.28px;">(0)</div>
<div class="b" style="left:1486px;top:473px;width:1px;height:45px;background:#e2e2e2;"></div>
<div class="t" style="right:103.70000000000005px;top:483.54px;font-size:10px;line-height:13px;color:#c4c4c4;font-weight:400;text-align:right;letter-spacing:0.28px;">2,550,000</div>
<div class="t" style="right:103.70000000000005px;top:496.54px;font-size:10px;line-height:13px;color:#c4c4c4;font-weight:400;text-align:right;letter-spacing:0.28px;">(0)</div>
<div class="b" style="left:1576px;top:473px;width:1px;height:45px;background:#e2e2e2;"></div>
<div class="t" style="right:13.700000000000045px;top:483.54px;font-size:10px;line-height:13px;color:#c4c4c4;font-weight:400;text-align:right;letter-spacing:0.28px;">2,550,000</div>
<div class="t" style="right:13.700000000000045px;top:496.54px;font-size:10px;line-height:13px;color:#c4c4c4;font-weight:400;text-align:right;letter-spacing:0.28px;">(0)</div>
<div class="b" style="left:71px;top:534px;width:14px;height:14px;background:#fbad38;border-radius:3px;"></div>
<div class="b" style="left:74px;top:540px;width:8.5px;height:2px;background:#fff;border-radius:1px;"></div>
<div class="t" style="left:90px;top:533.24px;font-size:12px;line-height:16px;color:#111;font-weight:400;-webkit-text-stroke:0.3px #111;">Min Nights</div>
<div class="t" style="left:90px;top:571.84px;font-size:12px;line-height:14px;color:#222;font-weight:400;-webkit-text-stroke:0.1px #222;letter-spacing:0.15px;">500577 : Min 2 nights</div>
<div class="t" style="left:90px;top:586.04px;font-size:12px;line-height:14px;color:#222;font-weight:400;-webkit-text-stroke:0.1px #222;letter-spacing:0.8px;">2025-03-13~2025-07-31</div>
<div class="b" style="left:300px;top:574px;width:23px;height:24px;background:#fff;border:1px solid #e3e3e3;border-radius:4px;"></div>
<svg style="position:absolute;left:305px;top:579px" width="12" height="13" viewBox="0 0 12 13"><path d="M3.5 0.5 L3.5 3 M8.5 0.5 L8.5 3" stroke="#555" stroke-width="1.4"/><rect x="0.5" y="2" width="11" height="2" fill="#555"/><rect x="0.5" y="5" width="11" height="7.5" rx="1" fill="#555"/><g fill="#fff"><rect x="2.2" y="6.5" width="1.6" height="1.6"/><rect x="5.2" y="6.5" width="1.6" height="1.6"/><rect x="8.2" y="6.5" width="1.6" height="1.6"/><rect x="2.2" y="9.5" width="1.6" height="1.6"/><rect x="5.2" y="9.5" width="1.6" height="1.6"/><rect x="8.2" y="9.5" width="1.6" height="1.6"/></g></svg>
<div class="b" style="left:333px;top:579px;width:16px;height:14px;border:1px solid #e8141e;border-radius:2px;color:#e8141e;font-size:9.5px;line-height:13px;text-align:center;font-family:"Liberation Sans", sans-serif;">A</div>
<div class="b" style="left:359px;top:579px;width:22px;height:14px;border:1px solid #555;border-radius:2px;color:#555;font-size:9.5px;line-height:13px;text-align:center;font-family:"Liberation Sans", sans-serif;">Dv</div>
<div class="t" style="right:1183.7px;top:567.03px;font-size:10px;line-height:13px;color:#1a1a1a;font-weight:400;text-align:right;-webkit-text-stroke:0.15px #1a1a1a;letter-spacing:0.28px;">2,500,000</div>
<div class="t" style="right:1183.7px;top:580.03px;font-size:10px;line-height:13px;color:#2418cc;font-weight:400;text-align:right;-webkit-text-stroke:0.15px #2418cc;letter-spacing:0.28px;">2,625,000</div>
<div class="t" style="right:1183.7px;top:593.03px;font-size:10px;line-height:13px;color:#1a1a1a;font-weight:400;text-align:right;-webkit-text-stroke:0.15px #1a1a1a;letter-spacing:0.28px;">(0)</div>
<div class="b" style="left:496px;top:563px;width:1px;height:45px;background:#e2e2e2;"></div>
<div class="t" style="right:1093.7px;top:573.53px;font-size:10px;line-height:13px;color:#1a1a1a;font-weight:400;text-align:right;-webkit-text-stroke:0.15px #1a1a1a;letter-spacing:0.28px;">3,000,000</div>
<div class="t" style="right:1093.7px;top:586.53px;font-size:10px;line-height:13px;color:#1a1a1a;font-weight:400;text-align:right;-webkit-text-stroke:0.15px #1a1a1a;letter-spacing:0.28px;">(0)</div>
<div class="b" style="left:586px;top:563px;width:1px;height:45px;background:#e2e2e2;"></div>
<div class="t" style="right:1003.7px;top:573.53px;font-size:10px;line-height:13px;color:#1a1a1a;font-weight:400;text-align:right;-webkit-text-stroke:0.15px #1a1a1a;letter-spacing:0.28px;">3,000,000</div>
<div class="t" style="right:1003.7px;top:586.53px;font-size:10px;line-height:13px;color:#1a1a1a;font-weight:400;text-align:right;-webkit-text-stroke:0.15px #1a1a1a;letter-spacing:0.28px;">(0)</div>
<div class="b" style="left:676px;top:563px;width:1px;height:45px;background:#e2e2e2;"></div>
<div class="t" style="right:913.7px;top:573.53px;font-size:10px;line-height:13px;color:#c4c4c4;font-weight:400;text-align:right;letter-spacing:0.28px;">3,000,000</div>
<div class="t" style="right:913.7px;top:586.53px;font-size:10px;line-height:13px;color:#c4c4c4;font-weight:400;text-align:right;letter-spacing:0.28px;">(0)</div>
<div class="b" style="left:766px;top:563px;width:1px;height:45px;background:#e2e2e2;"></div>
<div class="t" style="right:823.7px;top:573.53px;font-size:10px;line-height:13px;color:#c4c4c4;font-weight:400;text-align:right;letter-spacing:0.28px;">3,000,000</div>
<div class="t" style="right:823.7px;top:586.53px;font-size:10px;line-height:13px;color:#c4c4c4;font-weight:400;text-align:right;letter-spacing:0.28px;">(0)</div>
<div class="b" style="left:856px;top:563px;width:1px;height:45px;background:#e2e2e2;"></div>
<div class="t" style="right:733.7px;top:573.53px;font-size:10px;line-height:13px;color:#1a1a1a;font-weight:400;text-align:right;-webkit-text-stroke:0.15px #1a1a1a;letter-spacing:0.28px;">3,000,000</div>
<div class="t" style="right:733.7px;top:586.53px;font-size:10px;line-height:13px;color:#1a1a1a;font-weight:400;text-align:right;-webkit-text-stroke:0.15px #1a1a1a;letter-spacing:0.28px;">(0)</div>
<div class="b" style="left:946px;top:563px;width:1px;height:45px;background:#e2e2e2;"></div>
<div class="t" style="right:643.7px;top:573.53px;font-size:10px;line-height:13px;color:#1a1a1a;font-weight:400;text-align:right;-webkit-text-stroke:0.15px #1a1a1a;letter-spacing:0.28px;">3,000,000</div>
<div class="t" style="right:643.7px;top:586.53px;font-size:10px;line-height:13px;color:#1a1a1a;font-weight:400;text-align:right;-webkit-text-stroke:0.15px #1a1a1a;letter-spacing:0.28px;">(0)</div>
<div class="b" style="left:1036px;top:563px;width:1px;height:45px;background:#e2e2e2;"></div>
<div class="t" style="right:553.7px;top:573.53px;font-size:10px;line-height:13px;color:#1a1a1a;font-weight:400;text-align:right;-webkit-text-stroke:0.15px #1a1a1a;letter-spacing:0.28px;">3,000,000</div>
<div class="t" style="right:553.7px;top:586.53px;font-size:10px;line-height:13px;color:#1a1a1a;font-weight:400;text-align:right;-webkit-text-stroke:0.15px #1a1a1a;letter-spacing:0.28px;">(0)</div>
<div class="b" style="left:1126px;top:563px;width:1px;height:45px;background:#e2e2e2;"></div>
<div class="t" style="right:463.70000000000005px;top:573.53px;font-size:10px;line-height:13px;color:#1a1a1a;font-weight:400;text-align:right;-webkit-text-stroke:0.15px #1a1a1a;letter-spacing:0.28px;">3,000,000</div>
<div class="t" style="right:463.70000000000005px;top:586.53px;font-size:10px;line-height:13px;color:#1a1a1a;font-weight:400;text-align:right;-webkit-text-stroke:0.15px #1a1a1a;letter-spacing:0.28px;">(0)</div>
<div class="b" style="left:1216px;top:563px;width:1px;height:45px;background:#e2e2e2;"></div>
<div class="t" style="right:373.70000000000005px;top:573.53px;font-size:10px;line-height:13px;color:#c4c4c4;font-weight:400;text-align:right;letter-spacing:0.28px;">3,000,000</div>
<div class="t" style="right:373.70000000000005px;top:586.53px;font-size:10px;line-height:13px;color:#c4c4c4;font-weight:400;text-align:right;letter-spacing:0.28px;">(0)</div>
<div class="b" style="left:1306px;top:563px;width:1px;height:45px;background:#e2e2e2;"></div>
<div class="t" style="right:283.70000000000005px;top:573.53px;font-size:10px;line-height:13px;color:#c4c4c4;font-weight:400;text-align:right;letter-spacing:0.28px;">3,000,000</div>
<div class="t" style="right:283.70000000000005px;top:586.53px;font-size:10px;line-height:13px;color:#c4c4c4;font-weight:400;text-align:right;letter-spacing:0.28px;">(0)</div>
<div class="b" style="left:1396px;top:563px;width:1px;height:45px;background:#e2e2e2;"></div>
<div class="t" style="right:193.70000000000005px;top:573.53px;font-size:10px;line-height:13px;color:#c4c4c4;font-weight:400;text-align:right;letter-spacing:0.28px;">3,000,000</div>
<div class="t" style="right:193.70000000000005px;top:586.53px;font-size:10px;line-height:13px;color:#c4c4c4;font-weight:400;text-align:right;letter-spacing:0.28px;">(0)</div>
<div class="b" style="left:1486px;top:563px;width:1px;height:45px;background:#e2e2e2;"></div>
<div class="t" style="right:103.70000000000005px;top:573.53px;font-size:10px;line-height:13px;color:#1a1a1a;font-weight:400;text-align:right;-webkit-text-stroke:0.15px #1a1a1a;letter-spacing:0.28px;">3,000,000</div>
<div class="t" style="right:103.70000000000005px;top:586.53px;font-size:10px;line-height:13px;color:#1a1a1a;font-weight:400;text-align:right;-webkit-text-stroke:0.15px #1a1a1a;letter-spacing:0.28px;">(0)</div>
<div class="b" style="left:1576px;top:563px;width:1px;height:45px;background:#e2e2e2;"></div>
<div class="t" style="right:13.700000000000045px;top:573.53px;font-size:10px;line-height:13px;color:#1a1a1a;font-weight:400;text-align:right;-webkit-text-stroke:0.15px #1a1a1a;letter-spacing:0.28px;">3,000,000</div>
<div class="t" style="right:13.700000000000045px;top:586.53px;font-size:10px;line-height:13px;color:#1a1a1a;font-weight:400;text-align:right;-webkit-text-stroke:0.15px #1a1a1a;letter-spacing:0.28px;">(0)</div>
<div class="t" style="left:90px;top:616.84px;font-size:12px;line-height:14px;color:#222;font-weight:400;-webkit-text-stroke:0.1px #222;letter-spacing:0.15px;">500577 : Min 2 nights</div>
<div class="t" style="left:90px;top:631.04px;font-size:12px;line-height:14px;color:#222;font-weight:400;-webkit-text-stroke:0.1px #222;letter-spacing:0.8px;">2025-03-13~2025-07-31</div>
<div class="b" style="left:300px;top:619px;width:23px;height:24px;background:#fff;border:1px solid #e3e3e3;border-radius:4px;"></div>
<svg style="position:absolute;left:305px;top:624px" width="12" height="13" viewBox="0 0 12 13"><path d="M3.5 0.5 L3.5 3 M8.5 0.5 L8.5 3" stroke="#555" stroke-width="1.4"/><rect x="0.5" y="2" width="11" height="2" fill="#555"/><rect x="0.5" y="5" width="11" height="7.5" rx="1" fill="#555"/><g fill="#fff"><rect x="2.2" y="6.5" width="1.6" height="1.6"/><rect x="5.2" y="6.5" width="1.6" height="1.6"/><rect x="8.2" y="6.5" width="1.6" height="1.6"/><rect x="2.2" y="9.5" width="1.6" height="1.6"/><rect x="5.2" y="9.5" width="1.6" height="1.6"/><rect x="8.2" y="9.5" width="1.6" height="1.6"/></g></svg>
<div class="b" style="left:333px;top:624px;width:16px;height:14px;border:1px solid #e8141e;border-radius:2px;color:#e8141e;font-size:9.5px;line-height:13px;text-align:center;font-family:"Liberation Sans", sans-serif;">A</div>
<div class="b" style="left:359px;top:624px;width:22px;height:14px;border:1px solid #555;border-radius:2px;color:#555;font-size:9.5px;line-height:13px;text-align:center;font-family:"Liberation Sans", sans-serif;">Dv</div>
<div class="t" style="right:1183.7px;top:612.03px;font-size:10px;line-height:13px;color:#1a1a1a;font-weight:400;text-align:right;-webkit-text-stroke:0.15px #1a1a1a;letter-spacing:0.28px;">2,500,000</div>
<div class="t" style="right:1183.7px;top:625.03px;font-size:10px;line-height:13px;color:#2418cc;font-weight:400;text-align:right;-webkit-text-stroke:0.15px #2418cc;letter-spacing:0.28px;">2,625,000</div>
<div class="t" style="right:1183.7px;top:638.03px;font-size:10px;line-height:13px;color:#1a1a1a;font-weight:400;text-align:right;-webkit-text-stroke:0.15px #1a1a1a;letter-spacing:0.28px;">(0)</div>
<div class="b" style="left:496px;top:608px;width:1px;height:45px;background:#e2e2e2;"></div>
<div class="t" style="right:1093.7px;top:618.53px;font-size:10px;line-height:13px;color:#1a1a1a;font-weight:400;text-align:right;-webkit-text-stroke:0.15px #1a1a1a;letter-spacing:0.28px;">3,000,000</div>
<div class="t" style="right:1093.7px;top:631.53px;font-size:10px;line-height:13px;color:#1a1a1a;font-weight:400;text-align:right;-webkit-text-stroke:0.15px #1a1a1a;letter-spacing:0.28px;">(0)</div>
<div class="b" style="left:586px;top:608px;width:1px;height:45px;background:#e2e2e2;"></div>
<div class="t" style="right:1003.7px;top:618.53px;font-size:10px;line-height:13px;color:#1a1a1a;font-weight:400;text-align:right;-webkit-text-stroke:0.15px #1a1a1a;letter-spacing:0.28px;">3,000,000</div>
<div class="t" style="right:1003.7px;top:631.53px;font-size:10px;line-height:13px;color:#1a1a1a;font-weight:400;text-align:right;-webkit-text-stroke:0.15px #1a1a1a;letter-spacing:0.28px;">(0)</div>
<div class="b" style="left:676px;top:608px;width:1px;height:45px;background:#e2e2e2;"></div>
<div class="t" style="right:913.7px;top:618.53px;font-size:10px;line-height:13px;color:#c4c4c4;font-weight:400;text-align:right;letter-spacing:0.28px;">3,000,000</div>
<div class="t" style="right:913.7px;top:631.53px;font-size:10px;line-height:13px;color:#c4c4c4;font-weight:400;text-align:right;letter-spacing:0.28px;">(0)</div>
<div class="b" style="left:766px;top:608px;width:1px;height:45px;background:#e2e2e2;"></div>
<div class="t" style="right:823.7px;top:618.53px;font-size:10px;line-height:13px;color:#c4c4c4;font-weight:400;text-align:right;letter-spacing:0.28px;">3,000,000</div>
<div class="t" style="right:823.7px;top:631.53px;font-size:10px;line-height:13px;color:#c4c4c4;font-weight:400;text-align:right;letter-spacing:0.28px;">(0)</div>
<div class="b" style="left:856px;top:608px;width:1px;height:45px;background:#e2e2e2;"></div>
<div class="t" style="right:733.7px;top:618.53px;font-size:10px;line-height:13px;color:#1a1a1a;font-weight:400;text-align:right;-webkit-text-stroke:0.15px #1a1a1a;letter-spacing:0.28px;">3,000,000</div>
<div class="t" style="right:733.7px;top:631.53px;font-size:10px;line-height:13px;color:#1a1a1a;font-weight:400;text-align:right;-webkit-text-stroke:0.15px #1a1a1a;letter-spacing:0.28px;">(0)</div>
<div class="b" style="left:946px;top:608px;width:1px;height:45px;background:#e2e2e2;"></div>
<div class="t" style="right:643.7px;top:618.53px;font-size:10px;line-height:13px;color:#1a1a1a;font-weight:400;text-align:right;-webkit-text-stroke:0.15px #1a1a1a;letter-spacing:0.28px;">3,000,000</div>
<div class="t" style="right:643.7px;top:631.53px;font-size:10px;line-height:13px;color:#1a1a1a;font-weight:400;text-align:right;-webkit-text-stroke:0.15px #1a1a1a;letter-spacing:0.28px;">(0)</div>
<div class="b" style="left:1036px;top:608px;width:1px;height:45px;background:#e2e2e2;"></div>
<div class="t" style="right:553.7px;top:618.53px;font-size:10px;line-height:13px;color:#1a1a1a;font-weight:400;text-align:right;-webkit-text-stroke:0.15px #1a1a1a;letter-spacing:0.28px;">3,000,000</div>
<div class="t" style="right:553.7px;top:631.53px;font-size:10px;line-height:13px;color:#1a1a1a;font-weight:400;text-align:right;-webkit-text-stroke:0.15px #1a1a1a;letter-spacing:0.28px;">(0)</div>
<div class="b" style="left:1126px;top:608px;width:1px;height:45px;background:#e2e2e2;"></div>
<div class="t" style="right:463.70000000000005px;top:618.53px;font-size:10px;line-height:13px;color:#1a1a1a;font-weight:400;text-align:right;-webkit-text-stroke:0.15px #1a1a1a;letter-spacing:0.28px;">3,000,000</div>
<div class="t" style="right:463.70000000000005px;top:631.53px;font-size:10px;line-height:13px;color:#1a1a1a;font-weight:400;text-align:right;-webkit-text-stroke:0.15px #1a1a1a;letter-spacing:0.28px;">(0)</div>
<div class="b" style="left:1216px;top:608px;width:1px;height:45px;background:#e2e2e2;"></div>
<div class="t" style="right:373.70000000000005px;top:618.53px;font-size:10px;line-height:13px;color:#c4c4c4;font-weight:400;text-align:right;letter-spacing:0.28px;">3,000,000</div>
<div class="t" style="right:373.70000000000005px;top:631.53px;font-size:10px;line-height:13px;color:#c4c4c4;font-weight:400;text-align:right;letter-spacing:0.28px;">(0)</div>
<div class="b" style="left:1306px;top:608px;width:1px;height:45px;background:#e2e2e2;"></div>
<div class="t" style="right:283.70000000000005px;top:618.53px;font-size:10px;line-height:13px;color:#c4c4c4;font-weight:400;text-align:right;letter-spacing:0.28px;">3,000,000</div>
<div class="t" style="right:283.70000000000005px;top:631.53px;font-size:10px;line-height:13px;color:#c4c4c4;font-weight:400;text-align:right;letter-spacing:0.28px;">(0)</div>
<div class="b" style="left:1396px;top:608px;width:1px;height:45px;background:#e2e2e2;"></div>
<div class="t" style="right:193.70000000000005px;top:618.53px;font-size:10px;line-height:13px;color:#c4c4c4;font-weight:400;text-align:right;letter-spacing:0.28px;">3,000,000</div>
<div class="t" style="right:193.70000000000005px;top:631.53px;font-size:10px;line-height:13px;color:#c4c4c4;font-weight:400;text-align:right;letter-spacing:0.28px;">(0)</div>
<div class="b" style="left:1486px;top:608px;width:1px;height:45px;background:#e2e2e2;"></div>
<div class="t" style="right:103.70000000000005px;top:618.53px;font-size:10px;line-height:13px;color:#1a1a1a;font-weight:400;text-align:right;-webkit-text-stroke:0.15px #1a1a1a;letter-spacing:0.28px;">3,000,000</div>
<div class="t" style="right:103.70000000000005px;top:631.53px;font-size:10px;line-height:13px;color:#1a1a1a;font-weight:400;text-align:right;-webkit-text-stroke:0.15px #1a1a1a;letter-spacing:0.28px;">(0)</div>
<div class="b" style="left:1576px;top:608px;width:1px;height:45px;background:#e2e2e2;"></div>
<div class="t" style="right:13.700000000000045px;top:618.53px;font-size:10px;line-height:13px;color:#1a1a1a;font-weight:400;text-align:right;-webkit-text-stroke:0.15px #1a1a1a;letter-spacing:0.28px;">3,000,000</div>
<div class="t" style="right:13.700000000000045px;top:631.53px;font-size:10px;line-height:13px;color:#1a1a1a;font-weight:400;text-align:right;-webkit-text-stroke:0.15px #1a1a1a;letter-spacing:0.28px;">(0)</div>
<div class="b" style="left:71px;top:669px;width:14px;height:14px;background:#fbad38;border-radius:3px;"></div>
<div class="b" style="left:74px;top:675px;width:8.5px;height:2px;background:#fff;border-radius:1px;"></div>
<div class="t" style="left:90px;top:668.24px;font-size:12px;line-height:16px;color:#111;font-weight:400;-webkit-text-stroke:0.3px #111;">Min Nights</div>
<div class="b" style="left:380px;top:668px;width:16px;height:16px;background:#fff;border:1px solid #c9c9c9;border-radius:2px;"></div>
<div class="b" style="left:383px;top:675px;width:10px;height:1.6px;background:#8c8c8c;"></div>
<div class="b" style="left:387.2px;top:671px;width:1.6px;height:10px;background:#8c8c8c;"></div>
<div class="t" style="left:90px;top:706.84px;font-size:12px;line-height:14px;color:#222;font-weight:400;-webkit-text-stroke:0.1px #222;letter-spacing:0.15px;">500409 : Multiple period promotion</div>
<div class="t" style="left:90px;top:721.04px;font-size:12px;line-height:14px;color:#222;font-weight:400;-webkit-text-stroke:0.1px #222;letter-spacing:0.8px;">2022-01-01~2030-12-31</div>
<div class="b" style="left:300px;top:709px;width:23px;height:24px;background:#fff;border:1px solid #e3e3e3;border-radius:4px;"></div>
<svg style="position:absolute;left:305px;top:714px" width="12" height="13" viewBox="0 0 12 13"><path d="M3.5 0.5 L3.5 3 M8.5 0.5 L8.5 3" stroke="#555" stroke-width="1.4"/><rect x="0.5" y="2" width="11" height="2" fill="#555"/><rect x="0.5" y="5" width="11" height="7.5" rx="1" fill="#555"/><g fill="#fff"><rect x="2.2" y="6.5" width="1.6" height="1.6"/><rect x="5.2" y="6.5" width="1.6" height="1.6"/><rect x="8.2" y="6.5" width="1.6" height="1.6"/><rect x="2.2" y="9.5" width="1.6" height="1.6"/><rect x="5.2" y="9.5" width="1.6" height="1.6"/><rect x="8.2" y="9.5" width="1.6" height="1.6"/></g></svg>
<div class="b" style="left:333px;top:714px;width:22px;height:14px;border:1px solid #555;border-radius:2px;color:#555;font-size:9.5px;line-height:13px;text-align:center;font-family:"Liberation Sans", sans-serif;">Dv</div>
<div class="t" style="right:1183.7px;top:702.03px;font-size:10px;line-height:13px;color:#c4c4c4;font-weight:400;text-align:right;letter-spacing:0.28px;">2,200,000</div>
<div class="t" style="right:1183.7px;top:715.03px;font-size:10px;line-height:13px;color:#2418cc;font-weight:400;text-align:right;-webkit-text-stroke:0.15px #2418cc;letter-spacing:0.28px;">2,310,000</div>
<div class="t" style="right:1183.7px;top:728.03px;font-size:10px;line-height:13px;color:#c4c4c4;font-weight:400;text-align:right;letter-spacing:0.28px;">(0)</div>
<div class="b" style="left:496px;top:698px;width:1px;height:45px;background:#e2e2e2;"></div>
<div class="t" style="right:1093.7px;top:708.53px;font-size:10px;line-height:13px;color:#c4c4c4;font-weight:400;text-align:right;letter-spacing:0.28px;">2,640,000</div>
<div class="t" style="right:1093.7px;top:721.53px;font-size:10px;line-height:13px;color:#c4c4c4;font-weight:400;text-align:right;letter-spacing:0.28px;">(0)</div>
<div class="b" style="left:586px;top:698px;width:1px;height:45px;background:#e2e2e2;"></div>
<div class="t" style="right:1003.7px;top:708.53px;font-size:10px;line-height:13px;color:#c4c4c4;font-weight:400;text-align:right;letter-spacing:0.28px;">2,640,000</div>
<div class="t" style="right:1003.7px;top:721.53px;font-size:10px;line-height:13px;color:#c4c4c4;font-weight:400;text-align:right;letter-spacing:0.28px;">(0)</div>
<div class="b" style="left:676px;top:698px;width:1px;height:45px;background:#e2e2e2;"></div>
<div class="t" style="right:913.7px;top:708.53px;font-size:10px;line-height:13px;color:#c4c4c4;font-weight:400;text-align:right;letter-spacing:0.28px;">2,640,000</div>
<div class="t" style="right:913.7px;top:721.53px;font-size:10px;line-height:13px;color:#c4c4c4;font-weight:400;text-align:right;letter-spacing:0.28px;">(0)</div>
<div class="b" style="left:766px;top:698px;width:1px;height:45px;background:#e2e2e2;"></div>
<div class="t" style="right:823.7px;top:708.53px;font-size:10px;line-height:13px;color:#c4c4c4;font-weight:400;text-align:right;letter-spacing:0.28px;">2,640,000</div>
<div class="t" style="right:823.7px;top:721.53px;font-size:10px;line-height:13px;color:#c4c4c4;font-weight:400;text-align:right;letter-spacing:0.28px;">(0)</div>
<div class="b" style="left:856px;top:698px;width:1px;height:45px;background:#e2e2e2;"></div>
<div class="t" style="right:733.7px;top:708.53px;font-size:10px;line-height:13px;color:#c4c4c4;font-weight:400;text-align:right;letter-spacing:0.28px;">2,640,000</div>
<div class="t" style="right:733.7px;top:721.53px;font-size:10px;line-height:13px;color:#c4c4c4;font-weight:400;text-align:right;letter-spacing:0.28px;">(0)</div>
<div class="b" style="left:946px;top:698px;width:1px;height:45px;background:#e2e2e2;"></div>
<div class="t" style="right:643.7px;top:708.53px;font-size:10px;line-height:13px;color:#c4c4c4;font-weight:400;text-align:right;letter-spacing:0.28px;">2,640,000</div>
<div class="t" style="right:643.7px;top:721.53px;font-size:10px;line-height:13px;color:#c4c4c4;font-weight:400;text-align:right;letter-spacing:0.28px;">(0)</div>
<div class="b" style="left:1036px;top:698px;width:1px;height:45px;background:#e2e2e2;"></div>
<div class="t" style="right:553.7px;top:708.53px;font-size:10px;line-height:13px;color:#c4c4c4;font-weight:400;text-align:right;letter-spacing:0.28px;">2,640,000</div>
<div class="t" style="right:553.7px;top:721.53px;font-size:10px;line-height:13px;color:#c4c4c4;font-weight:400;text-align:right;letter-spacing:0.28px;">(0)</div>
<div class="b" style="left:1126px;top:698px;width:1px;height:45px;background:#e2e2e2;"></div>
<div class="t" style="right:463.70000000000005px;top:708.53px;font-size:10px;line-height:13px;color:#c4c4c4;font-weight:400;text-align:right;letter-spacing:0.28px;">2,640,000</div>
<div class="t" style="right:463.70000000000005px;top:721.53px;font-size:10px;line-height:13px;color:#c4c4c4;font-weight:400;text-align:right;letter-spacing:0.28px;">(0)</div>
<div class="b" style="left:1216px;top:698px;width:1px;height:45px;background:#e2e2e2;"></div>
<div class="t" style="right:373.70000000000005px;top:708.53px;font-size:10px;line-height:13px;color:#c4c4c4;font-weight:400;text-align:right;letter-spacing:0.28px;">2,640,000</div>
<div class="t" style="right:373.70000000000005px;top:721.53px;font-size:10px;line-height:13px;color:#c4c4c4;font-weight:400;text-align:right;letter-spacing:0.28px;">(0)</div>
<div class="b" style="left:1306px;top:698px;width:1px;height:45px;background:#e2e2e2;"></div>
<div class="t" style="right:283.70000000000005px;top:708.53px;font-size:10px;line-height:13px;color:#c4c4c4;font-weight:400;text-align:right;letter-spacing:0.28px;">2,640,000</div>
<div class="t" style="right:283.70000000000005px;top:721.53px;font-size:10px;line-height:13px;color:#c4c4c4;font-weight:400;text-align:right;letter-spacing:0.28px;">(0)</div>
<div class="b" style="left:1396px;top:698px;width:1px;height:45px;background:#e2e2e2;"></div>
<div class="t" style="right:193.70000000000005px;top:708.53px;font-size:10px;line-height:13px;color:#c4c4c4;font-weight:400;text-align:right;letter-spacing:0.28px;">2,640,000</div>
<div class="t" style="right:193.70000000000005px;top:721.53px;font-size:10px;line-height:13px;color:#c4c4c4;font-weight:400;text-align:right;letter-spacing:0.28px;">(0)</div>
<div class="b" style="left:1486px;top:698px;width:1px;height:45px;background:#e2e2e2;"></div>
<div class="t" style="right:103.70000000000005px;top:708.53px;font-size:10px;line-height:13px;color:#c4c4c4;font-weight:400;text-align:right;letter-spacing:0.28px;">2,640,000</div>
<div class="t" style="right:103.70000000000005px;top:721.53px;font-size:10px;line-height:13px;color:#c4c4c4;font-weight:400;text-align:right;letter-spacing:0.28px;">(0)</div>
<div class="b" style="left:1576px;top:698px;width:1px;height:45px;background:#e2e2e2;"></div>
<div class="t" style="right:13.700000000000045px;top:708.53px;font-size:10px;line-height:13px;color:#c4c4c4;font-weight:400;text-align:right;letter-spacing:0.28px;">2,640,000</div>
<div class="t" style="right:13.700000000000045px;top:721.53px;font-size:10px;line-height:13px;color:#c4c4c4;font-weight:400;text-align:right;letter-spacing:0.28px;">(0)</div>
<div class="b" style="left:71px;top:759px;width:14px;height:14px;background:#fbad38;border-radius:3px;"></div>
<div class="b" style="left:74px;top:765px;width:8.5px;height:2px;background:#fff;border-radius:1px;"></div>
<div class="t" style="left:90px;top:758.24px;font-size:12px;line-height:16px;color:#111;font-weight:400;-webkit-text-stroke:0.3px #111;">Basic1</div>
<div class="b" style="left:380px;top:758px;width:16px;height:16px;background:#fff;border:1px solid #c9c9c9;border-radius:2px;"></div>
<div class="b" style="left:383px;top:765px;width:10px;height:1.6px;background:#8c8c8c;"></div>
<div class="b" style="left:387.2px;top:761px;width:1.6px;height:10px;background:#8c8c8c;"></div>
<div class="b" style="left:6px;top:268px;width:1660px;height:45px;background:#333;"></div>
<div class="b" style="left:16px;top:283px;width:14px;height:14px;background:#fff;border-radius:2px;"></div>
<div class="b" style="left:19px;top:289px;width:9px;height:1.6px;background:#333;"></div>
<div class="t" style="left:35px;top:282.04px;font-size:12px;line-height:16px;color:#fff;font-weight:700;">Exclusive Rate : 109337</div>
<div class="t" style="left:416px;top:283.41px;font-size:10.5px;line-height:14.5px;color:#f07a3c;font-weight:700;letter-spacing:-0.45px;">Contract Status: A</div>
<div class="t" style="left:520.4px;top:283.41px;font-size:10.5px;line-height:14.5px;color:#f07a3c;font-weight:700;letter-spacing:-0.45px;">Curr : VND</div>
<div class="t" style="left:589.4px;top:283.41px;font-size:10.5px;line-height:14.5px;color:#f07a3c;font-weight:700;letter-spacing:-0.45px;">NET</div>
<div class="t" style="left:629.4px;top:283.41px;font-size:10.5px;line-height:14.5px;color:#f07a3c;font-weight:700;letter-spacing:-0.45px;">Rate : Alice</div>
<div class="t" style="left:701.4px;top:283.41px;font-size:10.5px;line-height:14.5px;color:#f07a3c;font-weight:700;letter-spacing:-0.45px;">Allotment : Alice</div>
<div class="b" style="left:509px;top:285px;width:1px;height:11px;background:#9a9a9a;"></div>
<div class="b" style="left:579px;top:285px;width:1px;height:11px;background:#9a9a9a;"></div>
<div class="b" style="left:619px;top:285px;width:1px;height:11px;background:#9a9a9a;"></div>
<div class="b" style="left:690px;top:285px;width:1px;height:11px;background:#9a9a9a;"></div>
<div class="t" style="left:1280.6px;top:282.57px;font-size:11.5px;line-height:15.5px;color:#fff;font-weight:700;text-decoration:underline;text-underline-offset:0.5px;">A-A Allotment</div>
<div class="t" style="left:1377.6px;top:282.57px;font-size:11.5px;line-height:15.5px;color:#fff;font-weight:700;text-decoration:underline;text-underline-offset:0.5px;">Rate</div>
<div class="t" style="left:1422.5px;top:282.57px;font-size:11.5px;line-height:15.5px;color:#fff;font-weight:700;text-decoration:underline;text-underline-offset:0.5px;">Allotment Add</div>
<div class="t" style="left:1525.1px;top:282.57px;font-size:11.5px;line-height:15.5px;color:#fff;font-weight:700;text-decoration:underline;text-underline-offset:0.5px;">Stop or Start Selling</div>
</div>
</div>
<div class="b" style="left:45px;top:547px;width:222px;height:113px;border:5px solid #e31a1c;"></div>
</body></html>
